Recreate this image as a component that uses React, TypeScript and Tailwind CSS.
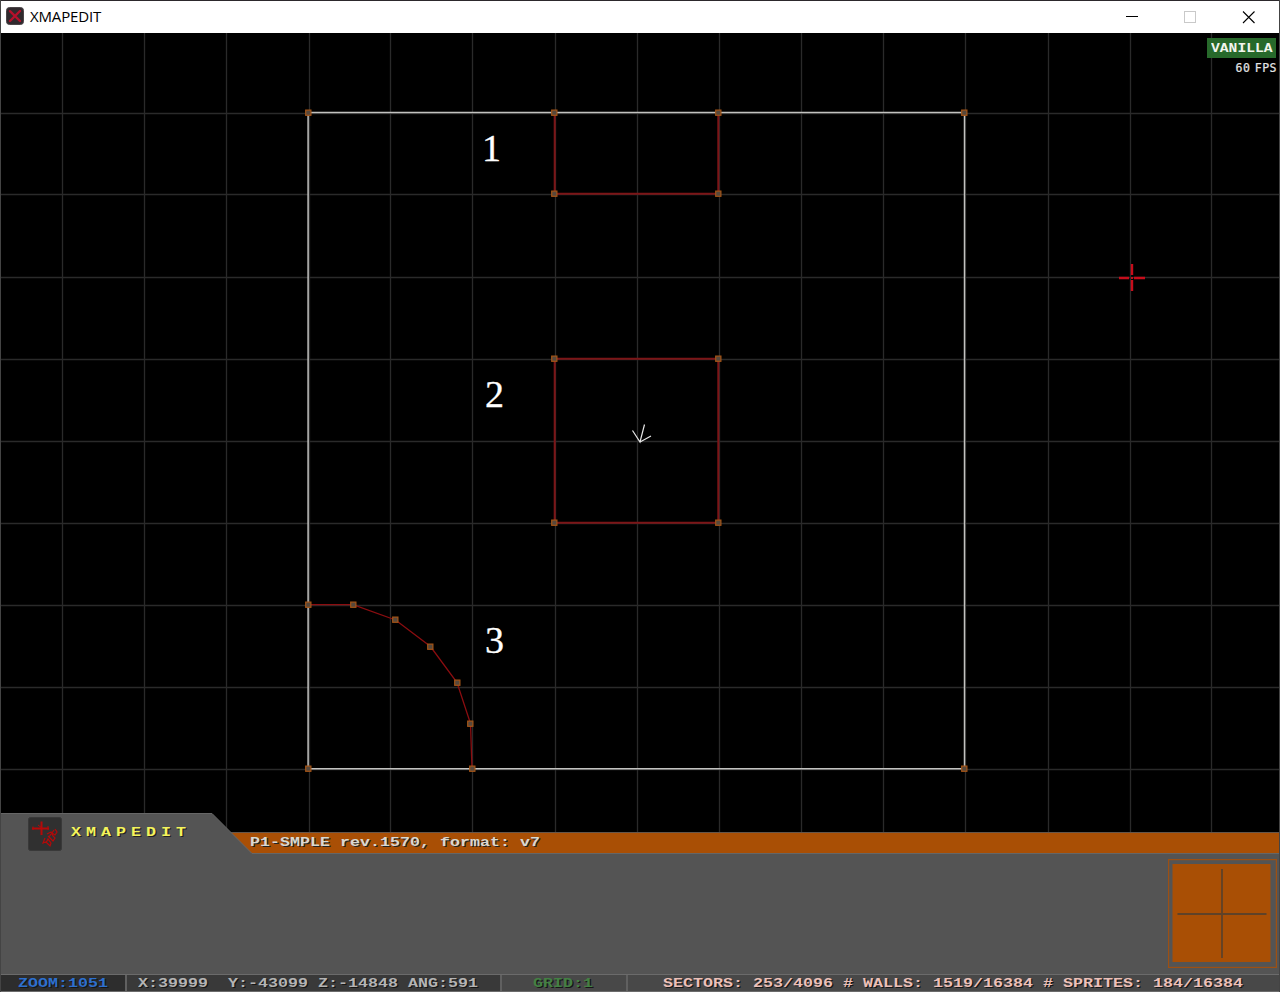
import React from "react";

const gridX = [62, 144, 226, 309, 390, 472, 555, 637, 719, 801, 883, 965, 1048, 1130, 1211];
const gridY = [113, 194, 277, 359, 441, 523, 605, 687, 769];

const vertices = [
  [308, 112], [554, 112], [718, 112], [964, 112],
  [554, 193], [718, 193], [554, 358], [718, 358],
  [554, 522], [718, 522], [308, 604], [353, 604],
  [395, 619], [430, 646], [457, 682], [470, 723],
  [472, 768], [308, 768], [964, 768],
];

type PixelTextProps = { text: string; cell?: number; size?: number; gap?: number; weight?: string; className?: string };

/* Fixed-cell bitmap-style label: glyphs are stretched to fill each cell, gap adds room between cells. */
function PixelText({ text, cell = 10, size = 13.5, gap = 0, weight = "font-bold", className = "" }: PixelTextProps) {
  const scale = cell / (size * 0.6001);
  return (
    <span className="block shrink-0" style={{ width: text.length * (cell + gap) }}>
      <span
        className={`block w-max origin-left whitespace-pre font-['Liberation_Mono',monospace] leading-[16px] ${weight} ${className}`}
        style={{ fontSize: size, letterSpacing: gap / scale, transform: `scaleX(${scale})` }}
      >
        {text}
      </span>
    </span>
  );
}

function TitleBar() {
  return (
    <header className="flex h-[33px] items-center border-t border-[#2c282c] bg-white pl-[6px] pr-[25px]">
      <svg width="18" height="18" viewBox="0 0 18 18" className="-mt-[2px]">
        <rect x="0.5" y="0.5" width="17" height="17" rx="3" fill="#30292d" stroke="#4b4548" />
        <path d="M4 4.2 14 14M14 4 4 14" stroke="#b5102b" strokeWidth="2.4" strokeLinecap="round" />
      </svg>
      <h1 className="-mt-[3px] ml-[6px] font-['Open_Sans',sans-serif] text-[15px] leading-[20px] tracking-[-0.15px] text-black">
        XMAPEDIT
      </h1>
      <div className="ml-auto flex items-center gap-[46px]">
        <svg width="12" height="12" shapeRendering="crispEdges"><path d="M0 5.5h12" stroke="#000" /></svg>
        <svg width="12" height="12" shapeRendering="crispEdges"><rect x="0.5" y="0.5" width="11" height="11" fill="none" stroke="#c9c9c9" /></svg>
        <svg width="13" height="13"><path d="M1 .5l11.500 11.500M12.500.5l-11.500 11.500" stroke="#000" strokeWidth="1.1" /></svg>
      </div>
    </header>
  );
}

function MapView() {
  return (
    <main className="relative h-[820px] bg-black">
      <svg width="1280" height="820" viewBox="0 33 1280 820" className="block">
        <g stroke="#2a2a2a" strokeWidth="1.3">
          {gridX.map((x) => <path key={x} d={`M${x + 0.5} 33V853`} />)}
          {gridY.map((y) => <path key={y} d={`M0 ${y + 0.5}H1280`} />)}
        </g>
        <g fill="none" stroke="#7c1517" strokeWidth="2">
          <path d="M554.700 112V193.700H718.300V112" />
          <path d="M554.700 358.700H718.300V522.700H554.700Z" />
        </g>
        <path d="M308 604.700H353L395.500 620L430.500 646.500L457 682.500L470.500 723.500L472 769" fill="none" stroke="#8b0d10" strokeWidth="1.3" />
        <path d="M308.100 112.500H964.500V768.800H308.100Z" fill="none" stroke="#c2c2c0" strokeWidth="1.5" />
        <g fill="#56483c" stroke="#a35417" strokeWidth="1.2">
          {vertices.map(([x, y]) => <rect key={`${x}-${y}`} x={x - 2.3} y={y - 1.9} width="5.200" height="5.200" />)}
        </g>
        <path d="M644.500 424.500L640 442L632.500 430.500M640 442L651 436" fill="none" stroke="#e6e6e6" strokeWidth="1.2" />
        <path d="M1132 264V275M1132 280V291M1119 278H1129M1134 278H1145" stroke="#c60d1b" strokeWidth="2.4" />
        <rect x="1131" y="277" width="2" height="2" fill="#c60d1b" />
      </svg>
      <div className="font-['Liberation_Serif',serif] text-[38px] leading-[38px] text-white [-webkit-text-stroke:0.3px_white]">
        <span className="absolute left-[482px] top-[96px]">1</span>
        <span className="absolute left-[485px] top-[342px]">2</span>
        <span className="absolute left-[485px] top-[588px]">3</span>
      </div>
      <div className="absolute right-[4px] top-[5px] flex flex-col items-end">
        <div className="flex h-[20px] w-[69px] items-center bg-[#27692b] pl-[4px] pt-px">
          <PixelText text="VANILLA" cell={8.8} size={13} className="text-[#f2f5ee]" />
        </div>
        <div className="-mr-px mt-[2px] whitespace-pre font-['DejaVu_Sans_Mono',monospace] text-[11.500px] leading-[16px] text-[#e4e4e4] [-webkit-text-stroke:0.2px_#e4e4e4] [word-spacing:-3px] tracking-[0.5px]">
          60 FPS
        </div>
      </div>
    </main>
  );
}

function PanelHeader() {
  return (
    <div className="relative -mt-[40px] grid h-[41px]">
      <svg width="1280" height="41" className="col-start-1 row-start-1 block">
        <path d="M230 19.500H1280V41H251Z" fill="#a94f05" />
        <path d="M230 19.500H1280" stroke="#66564a" />
        <path d="M0 .5H212L252 40.500V41H0Z" fill="#545454" />
        <path d="M0 .5H212L252 40.500H1280" fill="none" stroke="#666" />
      </svg>
      <div className="col-start-1 row-start-1 flex pl-[28px]">
        <svg width="34" height="34" viewBox="0 0 34 34" className="mt-[4px]">
          <rect x="0.500" y="0.500" width="33" height="33" rx="2" fill="#303030" stroke="#393939" />
          <g stroke="#b50909" fill="none">
            <path d="M13.500 4.500V18M4 11.500H21" strokeWidth="2" />
            <path d="M5 9.500V13M10 8l4 3M20 9v4" strokeWidth="1" />
            <path d="M27 12l2 3-2 3-3-2 2-3M19 17l4-2 2 4 2 2-2 3-3-3-2-2M17 21l-2 5 3-1 4 4 1-3-3-4-2 4M23 17l-2 3" strokeWidth="1.2" />
          </g>
        </svg>
        <div className="ml-[9px] mt-[12px]">
          <PixelText text="XMAPEDIT" gap={5} className="text-[#f4f45c] [text-shadow:1px_1px_0_#222]" />
        </div>
        <div className="ml-[59px] mt-[22px]">
          <PixelText text="P1-SMPLE rev.1570, format: v7" className="text-[#d9d9d1] [text-shadow:1px_1px_0_#222]" />
        </div>
      </div>
    </div>
  );
}

function StatusBar() {
  return (
    <footer className="flex h-[18px] shrink-0 items-center border-y border-[#6b6b6b] bg-[#484848] [text-shadow:1px_1px_0_#161616]">
      <div className="flex h-full w-[127px] items-center border-r-2 border-[#606060] bg-[#2d2d2d] pl-[18px] pt-px">
        <PixelText text="ZOOM:1051" className="text-[#2d70cf]" />
      </div>
      <div className="flex h-full w-[375px] items-center border-r-2 border-[#606060] bg-[#393939] pl-[11px] pt-px">
        <PixelText text="X:39999  Y:-43099 Z:-14848 ANG:591" className="text-[#b4b4b4]" />
      </div>
      <div className="flex h-full w-[126px] items-center border-r-2 border-[#606060] pl-[31px] pt-px">
        <PixelText text="GRID:1" className="text-[#438044]" />
      </div>
      <div className="flex h-full items-center pl-[35px] pt-px">
        <PixelText text="SECTORS: 253/4096 # WALLS: 1519/16384 # SPRITES: 184/16384" className="text-[#ecc0b9]" />
      </div>
    </footer>
  );
}

export default function App() {
  return (
    <div className="relative flex h-[992px] w-[1280px] flex-col overflow-hidden bg-[#545454]">
      <TitleBar />
      <MapView />
      <PanelHeader />
      <section className="flex h-[120px] shrink-0 justify-end pr-[3px] pt-[5px]">
        <svg width="109" height="109" className="block">
          <rect x="0.500" y="0.500" width="108" height="108" fill="none" stroke="#9c5014" strokeWidth="1.4" />
          <rect x="4.500" y="5" width="98" height="98" fill="#a94f05" />
          <path d="M54 10V99M9.500 55H98.500" stroke="#5f4228" strokeWidth="1.8" />
        </svg>
      </section>
      <StatusBar />
      <div className="pointer-events-none absolute inset-x-0 bottom-0 top-0 border-x border-x-[#444]" />
    </div>
  );
}
